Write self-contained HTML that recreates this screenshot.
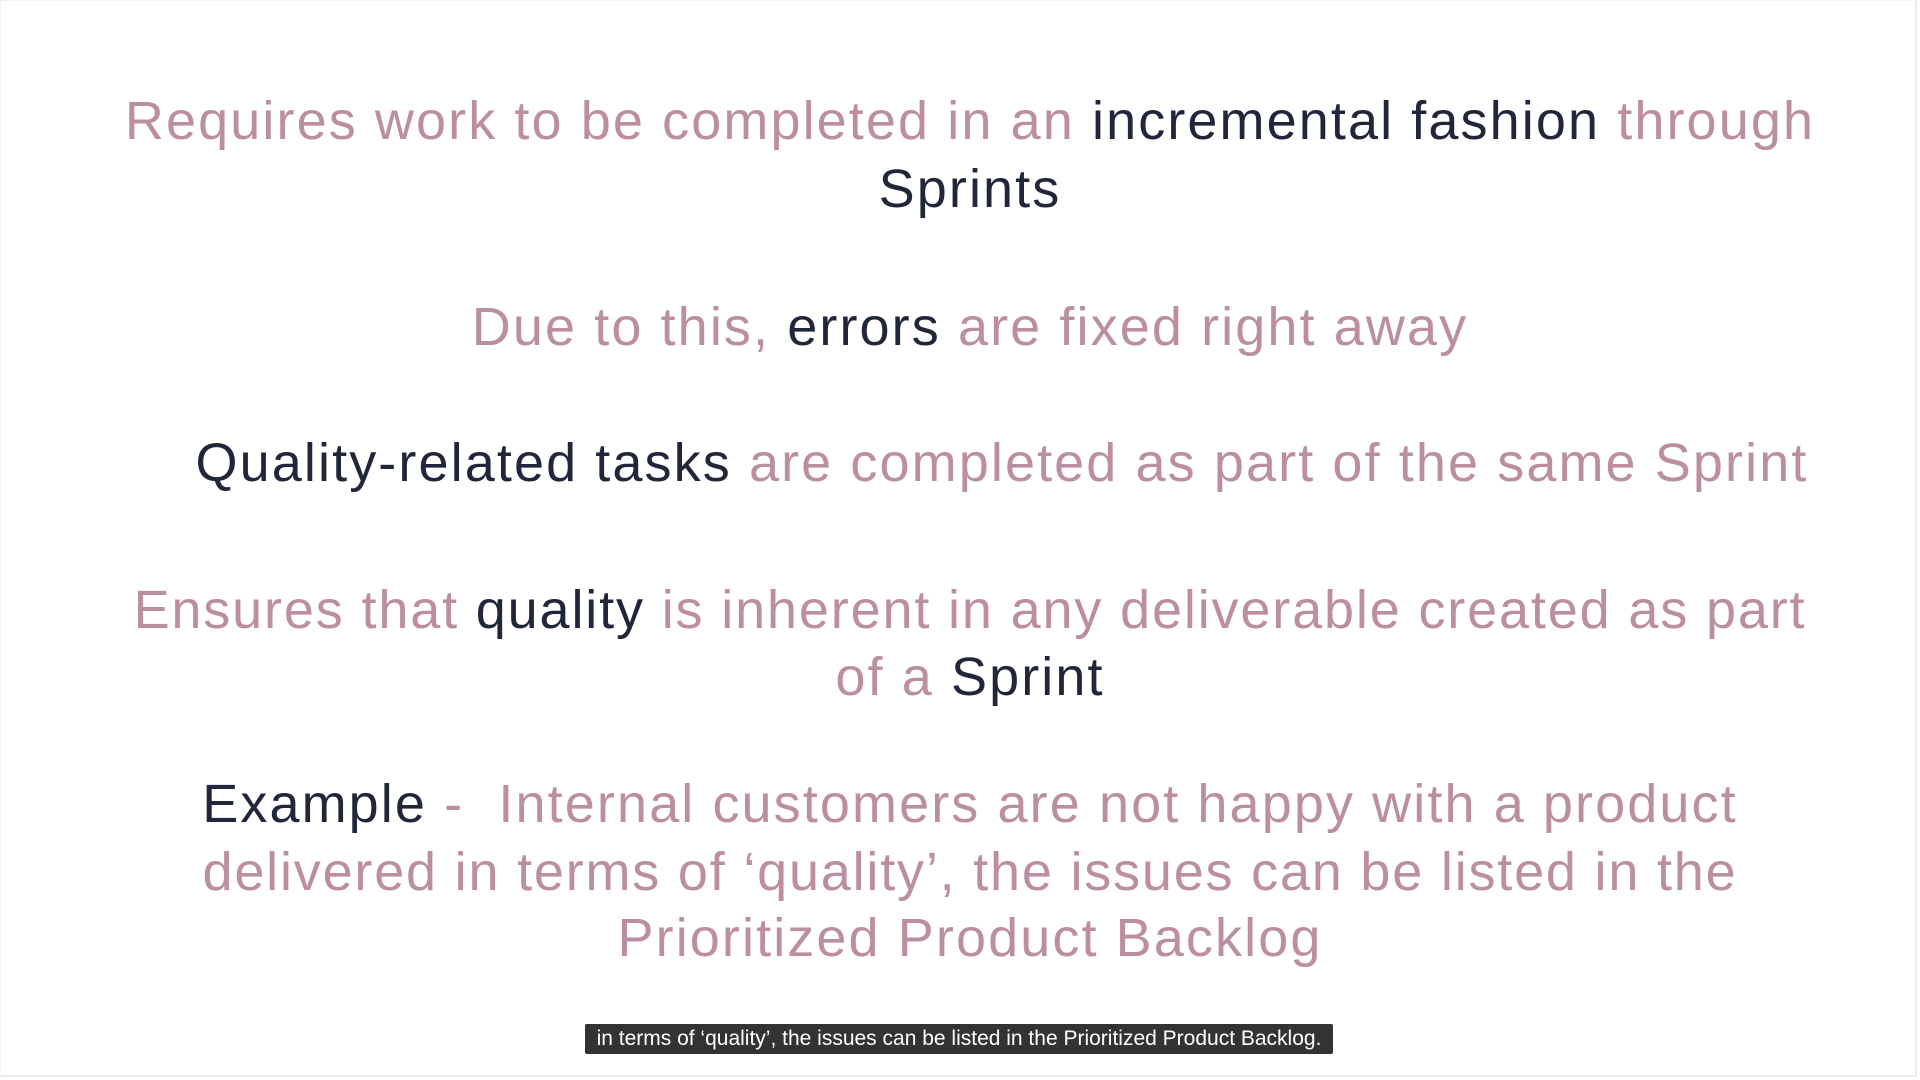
<!DOCTYPE html>
<html><head><meta charset="utf-8"><style>
html,body{margin:0;padding:0}
body{width:1920px;height:1080px;background:#fff;position:relative;overflow:hidden;font-family:"Liberation Sans",sans-serif}
.frame{position:absolute;left:0;top:0;width:1917px;height:1077px;border-right:2px solid #ececec;border-bottom:2px solid #ececec;border-left:1px solid #f3f3f3;border-top:1px solid #f3f3f3;box-sizing:border-box}
.l{position:absolute;left:0;width:1940px;text-align:center;font-size:54px;line-height:68px;height:68px;color:#bb8ea2;white-space:nowrap;letter-spacing:2.1px}
.d{color:#22263a}
.cap{position:absolute;left:585px;top:1024px;width:748px;height:30px;background:#333;color:#fff;font-size:21px;line-height:30px;text-align:center;border-radius:2px;white-space:nowrap}
</style></head><body>
<div class="frame"></div>
<div class="l" style="top:87px">Requires work to be completed in an <span class="d">incremental fashion</span> through</div>
<div class="l" style="top:155px"><span class="d">Sprints</span></div>
<div class="l" style="top:293px">Due to this, <span class="d">errors</span> are fixed right away</div>
<div class="l" style="top:429px;left:32px"><span class="d">Quality-related tasks</span> are completed as part of the same Sprint</div>
<div class="l" style="top:576px;letter-spacing:1.85px">Ensures that <span class="d">quality</span> is inherent in any deliverable created as part</div>
<div class="l" style="top:643px">of a <span class="d">Sprint</span></div>
<div class="l" style="top:770px"><span class="d">Example</span> -&nbsp; Internal customers are not happy with a product</div>
<div class="l" style="top:838px;letter-spacing:1.8px">delivered in terms of ‘quality’, the issues can be listed in the</div>
<div class="l" style="top:904px">Prioritized Product Backlog</div>
<div class="cap">in terms of ‘quality’, the issues can be listed in the Prioritized Product Backlog.</div>
</body></html>
